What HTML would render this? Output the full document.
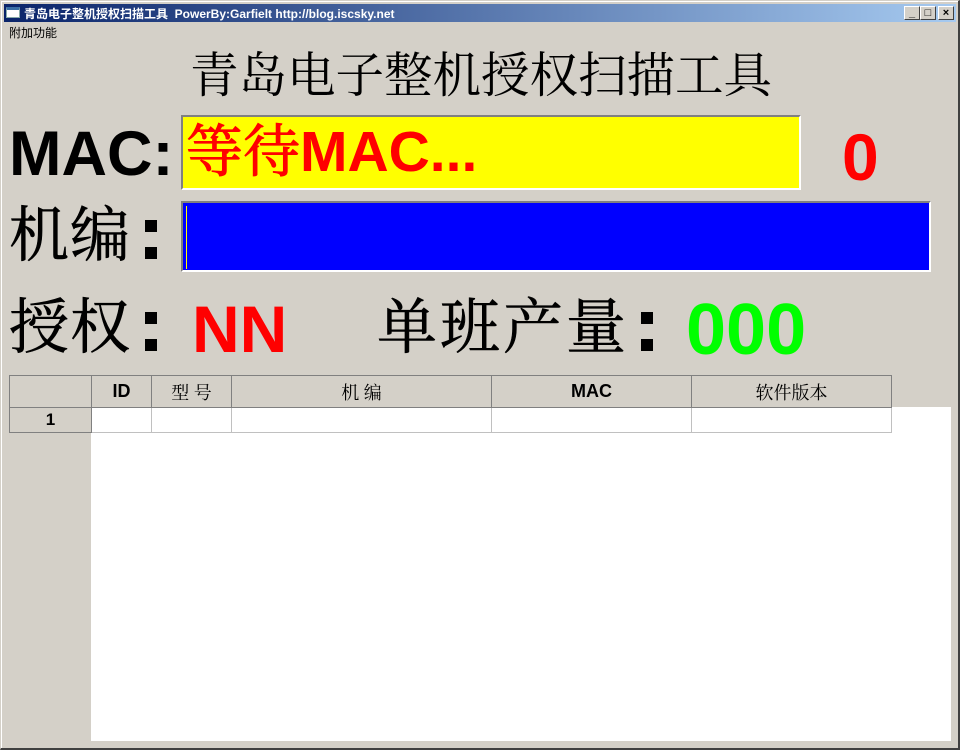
<!DOCTYPE html>
<html><head><meta charset="utf-8"><style>
*{margin:0;padding:0;box-sizing:border-box}
body{width:960px;height:750px;background:#d4d0c8;position:relative;overflow:hidden;font-family:"Liberation Sans","Noto Sans CJK SC",sans-serif}
.a{position:absolute;white-space:nowrap}
.serif{font-family:"Liberation Serif","Noto Serif CJK SC",serif}
.tb{left:4px;top:4px;width:952px;height:18px;background:linear-gradient(to right,#0a246a,#a6caf0)}
.btn{position:absolute;top:2px;width:16px;height:14px;background:#d4d0c8;border:1px solid;border-color:#fff #404040 #404040 #fff;font-size:11px;line-height:12px;text-align:center;font-weight:bold;color:#000}
table{border-collapse:collapse;position:absolute;left:9px;top:375px}
td{border:1px solid #c0c0c0;height:25px;background:#fff;text-align:center;font-weight:bold;font-size:17px}
th{border:1px solid #808080;height:32px;background:#d4d0c8;font-weight:bold;font-size:18px}
.sq{position:absolute;width:12px;height:12px;background:#000}
</style></head><body>
<div class="a" style="left:0;top:0;width:960px;height:750px;border:1px solid #d4d0c8;border-right:2px solid #404040;border-bottom:2px solid #404040;box-shadow:inset 1px 1px 0 #fff"></div>
<div class="a tb">
<div class="a" style="left:2px;top:3px;width:14px;height:11px;background:#fff;border:1px solid #8aa;border-top:3px solid #3a6ea5"></div>
<div class="a" style="left:20px;top:1px;color:#fff;font-weight:bold;font-size:12px">青岛电子整机授权扫描工具&nbsp;&nbsp;PowerBy:Garfielt http://blog.iscsky.net</div>
<div class="btn" style="left:900px">_</div><div class="btn" style="left:916px">□</div><div class="btn" style="left:934px">×</div>
</div>
<div class="a" style="left:9px;top:24px;font-size:12px">附加功能</div>
<div class="a serif" style="left:190px;top:47px;font-size:48.5px;line-height:60px">青岛电子整机授权扫描工具</div>
<div class="a" style="left:9px;top:117px;font-size:63px;font-weight:bold;line-height:75px">MAC:</div>
<div class="a" style="left:181px;top:115px;width:620px;height:75px;background:#ff0;border:2px solid;border-color:#808080 #fff #fff #808080"></div>
<div class="a" style="left:186px;top:119px;color:#f00;font-size:57px;line-height:66px"><span class="serif" style="-webkit-text-stroke:1px #f00">等待</span><b>MAC...</b></div>
<div class="a" style="left:842px;top:122px;color:#f00;font-size:66px;font-weight:bold;line-height:70px">0</div>
<div class="a serif" style="left:9px;top:199px;font-size:60px;line-height:75px;letter-spacing:1px;-webkit-text-stroke:0.6px #000">机编</div>
<div class="sq" style="left:145px;top:220px"></div><div class="sq" style="left:145px;top:247px"></div>
<div class="a" style="left:181px;top:201px;width:750px;height:71px;background:#00f;border:2px solid;border-color:#808080 #fff #fff #808080"></div>
<div class="a" style="left:186px;top:206px;width:1px;height:63px;background:#ff0"></div>
<div class="a serif" style="left:9px;top:291px;font-size:60px;line-height:75px;letter-spacing:1px;-webkit-text-stroke:0.6px #000">授权</div>
<div class="sq" style="left:145px;top:312px"></div><div class="sq" style="left:145px;top:339px"></div>
<div class="a" style="left:192px;top:289px;color:#f00;font-size:66px;font-weight:bold;line-height:80px">NN</div>
<div class="a serif" style="left:377px;top:291px;font-size:60px;line-height:75px;letter-spacing:3px;-webkit-text-stroke:0.6px #000">单班产量</div>
<div class="sq" style="left:641px;top:312px"></div><div class="sq" style="left:641px;top:339px"></div>
<div class="a" style="left:686px;top:290px;color:#0f0;font-size:72px;font-weight:bold;line-height:80px">000</div>
<div class="a" style="left:91px;top:407px;width:860px;height:334px;background:#fff"></div>
<table>
<tr><th style="width:82px"></th><th style="width:60px">ID</th><th style="width:80px;font-weight:normal" class="serif">型 号</th><th style="width:260px;font-weight:normal" class="serif">机 编</th><th style="width:200px">MAC</th><th style="width:200px;font-weight:normal" class="serif">软件版本</th></tr>
<tr><td style="background:#d4d0c8;border-color:#808080">1</td><td></td><td></td><td></td><td></td><td></td></tr>
</table>
</body></html>
